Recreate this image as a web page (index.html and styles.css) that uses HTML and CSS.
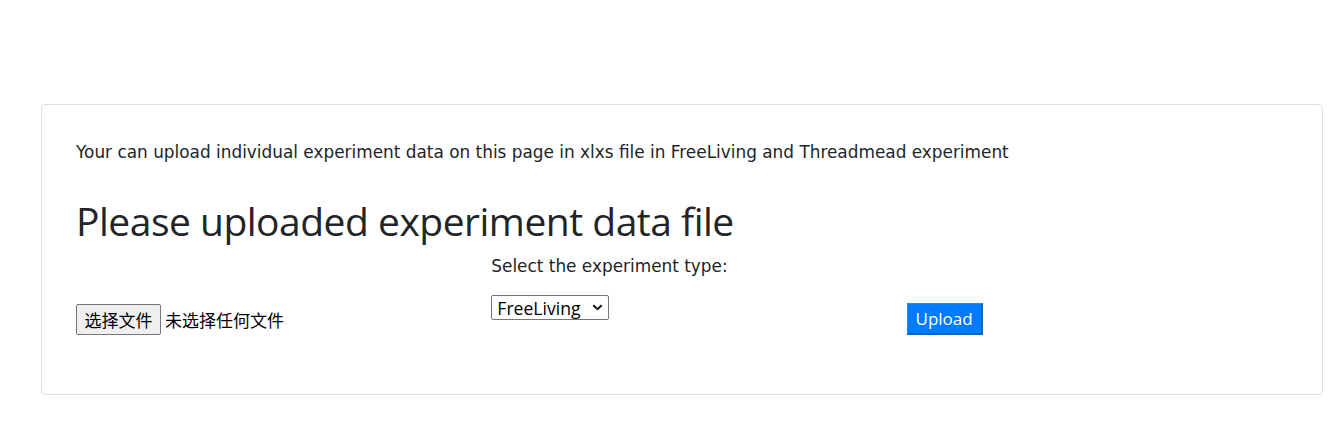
FILE: index.html
```html
<!DOCTYPE html>
<html>
<head>
<meta charset="utf-8">
<link rel="stylesheet" href="styles.css">
</head>
<body>
<div class="card">
  <p class="intro">Your can upload individual experiment data on this page in xlxs file in FreeLiving and Threadmead experiment</p>
  <h1 class="title">Please uploaded experiment data file</h1>
  <form class="row">
    <div class="col col-file">
      <label class="file">
        <span class="file-btn">选择文件</span>
        <span class="file-name">未选择任何文件</span>
      </label>
    </div>
    <div class="col col-select">
      <div class="select-label">Select the experiment type:</div>
      <div class="select-wrap">
        <select class="select">
          <option>FreeLiving</option>
          <option>Threadmead</option>
        </select>
        <svg class="chev" width="11" height="7" viewBox="0 0 11 7"><path d="M1.3 1.2 L5.5 5.2 L9.7 1.2" fill="none" stroke="#111" stroke-width="2"/></svg>
      </div>
    </div>
    <div class="col col-upload">
      <button type="button" class="upload">Upload</button>
    </div>
  </form>
</div>
</body>
</html>
```

FILE: styles.css
```css
html, body {
  margin: 0;
  padding: 0;
  background: #fff;
}
body {
  font-family: "DejaVu Sans", Verdana, sans-serif;
  color: #212529;
}
.card {
  margin: 104px 18px 0 41px;
  height: 291px;
  box-sizing: border-box;
  border: 1px solid #dfdfdf;
  border-radius: 4px;
  padding: 36px 0 0 34px;
}
.intro {
  margin: 0;
  font-size: 16.9px;
  line-height: 22px;
}
.title {
  margin: 34px 0 0 0;
  font-family: "Open Sans", "Noto Sans", sans-serif;
  font-weight: 400;
  font-size: 39px;
  letter-spacing: -0.5px;
  line-height: 48px;
  color: #212529;
}
.row {
  display: grid;
  grid-template-columns: 415.3px 415.3px 415.3px;
  margin-top: 10px;
}
.col-file {
  padding-top: 49px;
}
.file {
  display: flex;
  align-items: center;
  gap: 4px;
  font-family: "Noto Sans CJK SC", sans-serif;
  font-size: 17px;
  color: #000;
}
.file-btn {
  display: inline-block;
  box-sizing: border-box;
  height: 31px;
  line-height: 29px;
  padding: 0 7.5px;
  border: 1px solid #767676;
  border-radius: 2px;
  background: #efefef;
}
.select-label {
  font-size: 16.9px;
  line-height: 22px;
}
.select-wrap {
  position: relative;
  display: inline-block;
  margin-top: 18px;
}
.select {
  -webkit-appearance: none;
  appearance: none;
  font-family: "Open Sans", sans-serif;
  font-size: 17.6px;
  color: #000;
  height: 25px;
  width: 118px;
  padding: 0 0 0 5px;
  border: 1px solid #767676;
  border-radius: 2px;
  background: #fff;
}
.chev {
  position: absolute;
  right: 6px;
  top: 9px;
  pointer-events: none;
}
.col-upload {
  padding-top: 48px;
}
.upload {
  font-family: "Open Sans", sans-serif;
  font-size: 17px;
  color: #fff;
  background: #007bff;
  border-style: solid;
  border-width: 1px 2px 2px 1px;
  border-color: #1a88ff #0062cc #0062cc #1a88ff;
  height: 32px;
  width: 76px;
  padding: 0;
}
```
